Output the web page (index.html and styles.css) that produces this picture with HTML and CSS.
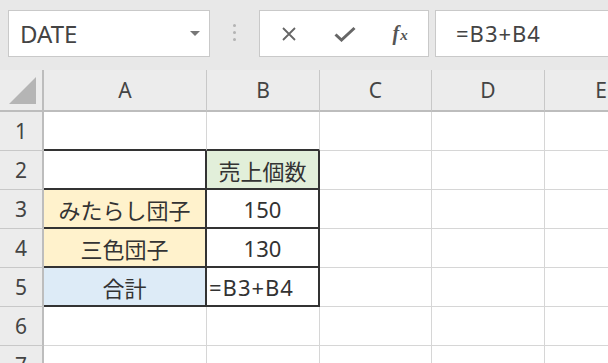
FILE: index.html
```html
<!DOCTYPE html>
<html lang="ja">
<head>
    <meta charset="UTF-8">
    <meta name="viewport" content="width=device-width, initial-scale=1.0">
    <title>売上個数</title>
    <link rel="stylesheet" href="styles.css">
</head>
<body>
    <div class="toolbar">
        <div class="namebox">
            <span class="name">DATE</span>
            <span class="caret"></span>
        </div>
        <div class="grip"><i></i><i></i><i></i></div>
        <div class="fbuttons">
            <span class="fbtn">
                <svg width="16" height="16" viewBox="0 0 16 16"><path d="M2 2L14 14M14 2L2 14" stroke="#666" stroke-width="1.8" fill="none"/></svg>
            </span>
            <span class="fbtn">
                <svg width="22" height="16" viewBox="0 0 22 16"><path d="M1.5 8.5L7.5 14L20.5 2" stroke="#666" stroke-width="3" fill="none"/></svg>
            </span>
            <span class="fbtn fx">f<span class="fx-x">x</span></span>
        </div>
        <div class="formula">=B3+B4</div>
    </div>

    <div class="sheet">
        <div class="corner">
            <svg width="28" height="28" viewBox="0 0 28 28"><polygon points="27,0 27,27 0,27" fill="#b5b5b5"/></svg>
        </div>
        <div class="colhead">A</div>
        <div class="colhead">B</div>
        <div class="colhead">C</div>
        <div class="colhead">D</div>
        <div class="colhead">E</div>

        <!-- row 1 -->
        <div class="rowhead">1</div>
        <div class="cell top"></div>
        <div class="cell top"></div>
        <div class="cell"></div>
        <div class="cell"></div>
        <div class="cell"></div>

        <!-- row 2 -->
        <div class="rowhead">2</div>
        <div class="cell box"></div>
        <div class="cell box green">売上個数</div>
        <div class="cell"></div>
        <div class="cell"></div>
        <div class="cell"></div>

        <!-- row 3 -->
        <div class="rowhead">3</div>
        <div class="cell box orange">みたらし団子</div>
        <div class="cell box">150</div>
        <div class="cell"></div>
        <div class="cell"></div>
        <div class="cell"></div>

        <!-- row 4 -->
        <div class="rowhead">4</div>
        <div class="cell box orange">三色団子</div>
        <div class="cell box">130</div>
        <div class="cell"></div>
        <div class="cell"></div>
        <div class="cell"></div>

        <!-- row 5 -->
        <div class="rowhead">5</div>
        <div class="cell box blue">合計</div>
        <div class="cell box left">=B3+B4</div>
        <div class="cell"></div>
        <div class="cell"></div>
        <div class="cell"></div>

        <!-- row 6 -->
        <div class="rowhead">6</div>
        <div class="cell"></div>
        <div class="cell"></div>
        <div class="cell"></div>
        <div class="cell"></div>
        <div class="cell"></div>

        <!-- row 7 -->
        <div class="rowhead">7</div>
        <div class="cell"></div>
        <div class="cell"></div>
        <div class="cell"></div>
        <div class="cell"></div>
        <div class="cell"></div>
    </div>
</body>
</html>
```

FILE: styles.css
```css
* {
    box-sizing: border-box;
}
body {
    margin: 0;
    width: 608px;
    height: 363px;
    overflow: hidden;
    background-color: #fff;
    font-family: "Noto Sans", "Noto Sans CJK JP", sans-serif;
    color: #333;
}
.toolbar {
    display: flex;
    align-items: flex-start;
    height: 70px;
    padding: 10px 0 0 8px;
    background-color: #e8e8e8;
}
.namebox {
    display: flex;
    align-items: center;
    justify-content: space-between;
    width: 202px;
    height: 47px;
    padding: 0 9px 0 11px;
    background-color: #fff;
    border: 1px solid #c9c9c9;
}
.name {
    font-size: 24px;
    color: #444;
}
.caret {
    width: 0;
    height: 0;
    border-left: 5px solid transparent;
    border-right: 5px solid transparent;
    border-top: 5px solid #777;
}
.grip {
    display: flex;
    flex-direction: column;
    align-items: center;
    gap: 4px;
    width: 49px;
    padding-top: 14px;
}
.grip i {
    width: 3px;
    height: 3px;
    border-radius: 50%;
    background-color: #b3b3b3;
}
.fbuttons {
    display: flex;
    align-items: center;
    width: 170px;
    height: 47px;
    padding-left: 1px;
    background-color: #fff;
    border: 1px solid #c9c9c9;
}
.fbtn {
    display: flex;
    align-items: center;
    justify-content: center;
    width: 56px;
}
.fx {
    align-items: baseline;
    font-family: "Liberation Serif", serif;
    font-style: italic;
    font-weight: bold;
    font-size: 20px;
    color: #555;
}
.fx-x {
    font-size: 15px;
    margin-left: 1px;
}
.formula {
    flex: 1;
    height: 47px;
    margin-left: 6px;
    padding-left: 20px;
    line-height: 45px;
    font-size: 22px;
    letter-spacing: 1px;
    color: #444;
    background-color: #fff;
    border: 1px solid #c9c9c9;
    border-right: none;
}
.sheet {
    display: grid;
    grid-template-columns: 44px 163px 113px 112px 113px 113px;
    grid-template-rows: 42px;
    grid-auto-rows: 39px;
    overflow: hidden;
}
.corner,
.colhead,
.rowhead {
    display: flex;
    align-items: center;
    justify-content: center;
    background-color: #ececec;
    color: #444;
    font-size: 21px;
}
.corner {
    align-items: flex-end;
    justify-content: flex-end;
    padding: 0 5px 5px 0;
    border-right: 2px solid #bdbdbd;
    border-bottom: 2px solid #bdbdbd;
}
.colhead {
    border-right: 1px solid #c8c8c8;
    border-bottom: 2px solid #bdbdbd;
}
.rowhead {
    border-right: 2px solid #bdbdbd;
    border-bottom: 1px solid #c8c8c8;
}
.cell {
    display: flex;
    align-items: center;
    justify-content: center;
    font-size: 22px;
    color: #333;
    white-space: nowrap;
    border-right: 1px solid #d6d6d6;
    border-bottom: 1px solid #d6d6d6;
}
.cell.top {
    border-bottom: 2px solid #333;
}
.cell.box {
    border-right: 2px solid #333;
    border-bottom: 2px solid #333;
}
.cell.left {
    justify-content: flex-start;
    padding-left: 2px;
    letter-spacing: 1px;
}
.green {
    background-color: #e2efda;
}
.orange {
    background-color: #fff2cc;
}
.blue {
    background-color: #ddebf7;
}
```
